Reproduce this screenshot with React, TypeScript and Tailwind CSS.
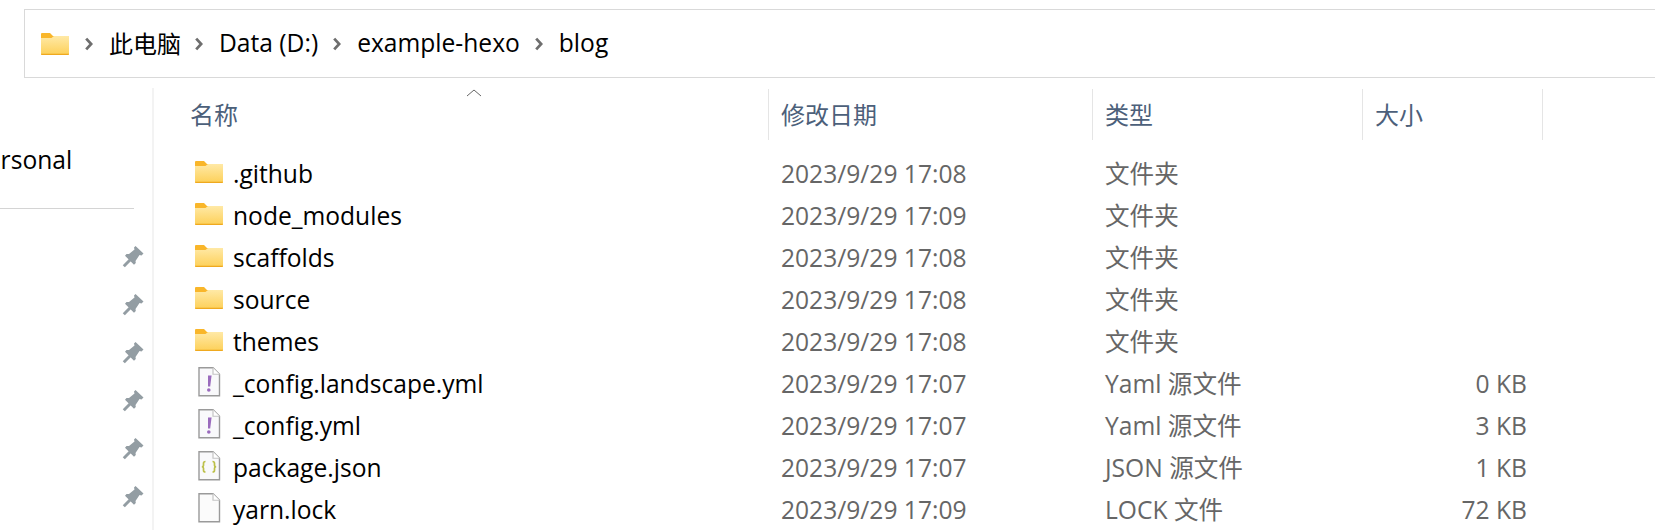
const FONT = "font-['Open_Sans','Noto_Sans_CJK_SC',sans-serif]"

type Row = { name: string; icon: 'folder' | 'yaml' | 'json' | 'file'; date: string; type: string; size?: string }

const rows: Row[] = [
  { name: '.github', icon: 'folder', date: '2023/9/29 17:08', type: '文件夹' },
  { name: 'node_modules', icon: 'folder', date: '2023/9/29 17:09', type: '文件夹' },
  { name: 'scaffolds', icon: 'folder', date: '2023/9/29 17:08', type: '文件夹' },
  { name: 'source', icon: 'folder', date: '2023/9/29 17:08', type: '文件夹' },
  { name: 'themes', icon: 'folder', date: '2023/9/29 17:08', type: '文件夹' },
  { name: '_config.landscape.yml', icon: 'yaml', date: '2023/9/29 17:07', type: 'Yaml 源文件', size: '0 KB' },
  { name: '_config.yml', icon: 'yaml', date: '2023/9/29 17:07', type: 'Yaml 源文件', size: '3 KB' },
  { name: 'package.json', icon: 'json', date: '2023/9/29 17:07', type: 'JSON 源文件', size: '1 KB' },
  { name: 'yarn.lock', icon: 'file', date: '2023/9/29 17:09', type: 'LOCK 文件', size: '72 KB' },
]

function FolderIcon() {
  return (
    <svg width="28" height="22" viewBox="0 0 28 22" className="shrink-0">
      <defs>
        <linearGradient id="fold" x1="0" y1="0" x2="0" y2="1">
          <stop offset="0" stopColor="#ffe9a6" />
          <stop offset="1" stopColor="#fdd058" />
        </linearGradient>
      </defs>
      <path d="M0 1Q0 0 1 0H9L12 3H27Q28 3 28 4V7H0Z" fill="#f9b62a" />
      <path d="M0 5H10.5L13 3H28V21Q28 22 27 22H1Q0 22 0 21Z" fill="url(#fold)" />
      <path d="M0 20.8H28V21Q28 22 27 22H1Q0 22 0 21Z" fill="#efa91f" />
    </svg>
  )
}

function FileIcon({ kind }: { kind: Row['icon'] }) {
  return (
    <svg width="23" height="30" viewBox="0 0 23 30" className="shrink-0 ml-[3px]">
      <path d="M1 .75H15L21.5 7.25V28.75H1Z" fill={kind === 'file' ? '#fbfbfb' : '#f9f9fb'} stroke="#9a9a9a" strokeWidth="1.4" />
      <path d="M15 .75V7.25H21.5" fill="#fff" stroke="#c4c4c4" strokeWidth="1.2" />
      {kind === 'yaml' && (
        <>
          <path d="M10 8.5H13.6L12.2 19.5H10Z" fill="#9a6bbd" />
          <circle cx="10.8" cy="23" r="1.8" fill="#9a6bbd" />
        </>
      )}
      {kind === 'json' && (
        <g fill="none" stroke="#bcc04a" strokeWidth="1.7">
          <path d="M7.5 10.5Q5.5 10.5 5.5 12.5V14.5Q5.5 15.5 4 15.8Q5.5 16.2 5.5 17.2V19.2Q5.5 21 7.5 21" />
          <path d="M14.5 10.5Q16.5 10.5 16.5 12.5V14.5Q16.5 15.5 18 15.8Q16.5 16.2 16.5 17.2V19.2Q16.5 21 14.5 21" />
        </g>
      )}
    </svg>
  )
}

function Pin() {
  return (
    <svg width="22" height="22" viewBox="0 0 22 22" className="block">
      <path d="M13.5 0L21.5 7.5L19.5 9.5L17.5 9L13.5 15L13.8 17L12 18.8L3 9.8L4.5 8L7 8L12.5 3.5L12 1.5Z" fill="#939da3" />
      <path d="M8.5 13.5L1.8 20.2" stroke="#939da3" strokeWidth="3" />
    </svg>
  )
}

function Chevron() {
  return (
    <svg width="8" height="14" viewBox="0 0 8 14" className="block shrink-0">
      <path d="M1.2 1.6L6.2 7L1.2 12.4" fill="none" stroke="#6e6e6e" strokeWidth="2.8" />
    </svg>
  )
}

export default function App() {
  return (
    <div className={`${FONT} w-[1655px] h-[530px] overflow-hidden bg-white text-[24.6px] pt-[9px]`}>
      {/* address bar */}
      <div className="ml-6 h-[69px] border border-[#d9d9d9] border-r-0 flex items-center pl-[16px] text-black">
        <FolderIcon />
        <span className="ml-4"><Chevron /></span>
        <span className="ml-4 text-[24px]">此电脑</span>
        <span className="ml-[14px]"><Chevron /></span>
        <span className="ml-[16px]">Data (D:)</span>
        <span className="ml-[15px]"><Chevron /></span>
        <span className="ml-4">example-hexo</span>
        <span className="ml-[15px]"><Chevron /></span>
        <span className="ml-4">blog</span>
      </div>

      <div className="flex h-[452px]">
        {/* nav pane */}
        <div className="w-[154px] shrink-0 border-r-2 border-[#f3f3f3] overflow-hidden mt-[10px]">
          <div className="h-[120px] -ml-[28px] pt-[55px] leading-[34px] whitespace-nowrap">Personal</div>
          <div className="h-px w-[134px] bg-[#d4d4d4]" />
          <div className="flex flex-col gap-[26px] pl-[122px] pt-[37px]">
            {[0, 1, 2, 3, 4, 5].map((i) => (
              <Pin key={i} />
            ))}
          </div>
        </div>

        {/* file list */}
        <div className="flex-1 relative">
          <svg width="16" height="8" viewBox="0 0 16 8" className="absolute left-[312px] top-[11px]">
            <path d="M1 7L8 1L15 7" fill="none" stroke="#666666" strokeWidth="1" />
          </svg>

          <div className="grid grid-cols-[614px_324px_270px_181px] mt-[11px] h-[51px] items-center text-[24px] text-[#4c607a]">
            <div className="pl-9">名称</div>
            <div className="h-full flex items-center border-l border-[#e5e5e5] pl-3">修改日期</div>
            <div className="h-full flex items-center border-l border-[#e5e5e5] pl-3">类型</div>
            <div className="h-full flex items-center border-l border-r border-[#e5e5e5] pl-3">大小</div>
          </div>

          <div className="mt-[13px]">
            {rows.map((r) => (
              <div key={r.name} className="grid grid-cols-[614px_324px_270px_165px] h-[42px] items-center whitespace-nowrap text-[#666666]">
                <div className="flex items-center pl-[41px] text-black">
                  <div className="w-[38px] shrink-0 -mt-[4px] flex">
                    {r.icon === 'folder' ? <FolderIcon /> : <FileIcon kind={r.icon} />}
                  </div>
                  {r.name}
                </div>
                <div className="pl-[13px]">{r.date}</div>
                <div className="pl-[13px]">{r.type}</div>
                <div className="text-right">{r.size}</div>
              </div>
            ))}
          </div>
        </div>
      </div>
    </div>
  )
}
